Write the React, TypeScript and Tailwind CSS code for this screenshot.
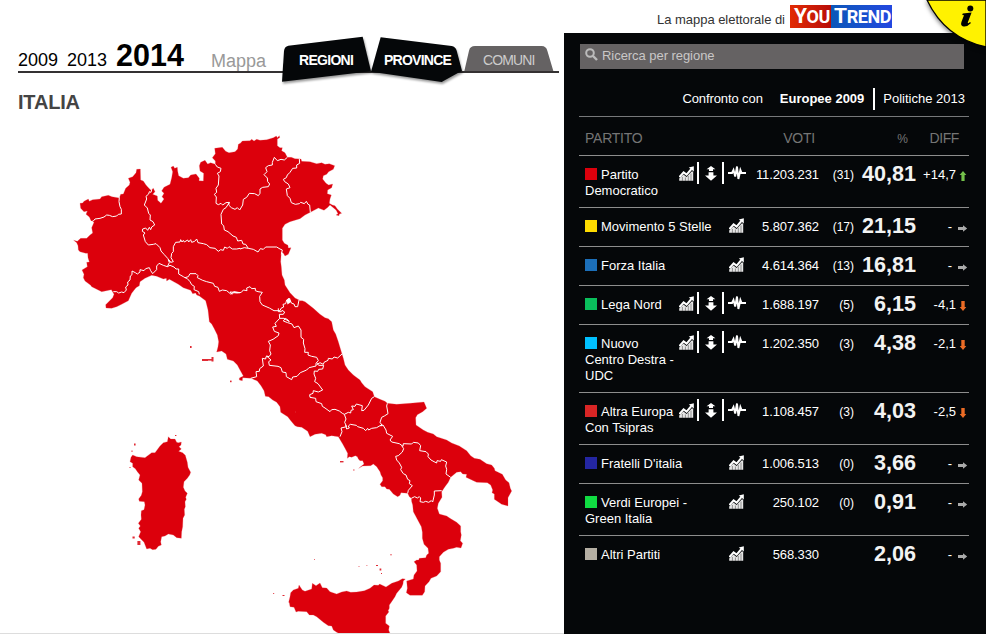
import React from "react";

type Tile = [number, number, string];

// Outlines are stored per map tile: tile origin followed by points at triple resolution.
function trace(tiles: Tile[], close = true): string {
  const pts = tiles.flatMap(([ox, oy, data]) =>
    data.split(" ").map((pair) => {
      const [u, v] = pair.split(",").map(Number);
      return `${(ox + u / 3).toFixed(2)} ${(oy + v / 3).toFixed(2)}`;
    })
  );
  return `M${pts.join("L")}${close ? "Z" : ""}`;
}

const mainland: Tile[] = [
  [60, 125, "41,346 52,349 62,340 80,340 90,330 98,324 95,308 102,292 93,287 88,276 78,268 82,258 72,260 62,250 60,235 68,234 72,229 85,222 88,229 98,224 120,222 125,215 145,211 156,215 178,219 182,208 190,207 197,190 208,180 210,172 205,160 218,155 228,143 230,133 241,132 242,165 250,168 258,180 264,187 272,195 280,190 285,200 278,208 292,213 293,226 303,235 312,222 306,215 312,205 305,198 312,187 330,178 335,158 338,140 333,127 340,123 344,130 352,127 353,138 356,152 370,160 385,158 392,150 408,147 418,160 417,167 430,168 431,145 420,138 418,122 422,112 435,106 443,117 452,113 466,118 466,108 457,98 466,86 464,70 487,67 497,79 507,83 525,80 533,72 535,58"],
  [200, 125, "121,55 127,48 150,47 155,43 162,48 170,43 180,46 200,44 220,38 229,33 232,38 238,32 239,38 232,42 232,62 240,68 247,68 245,77 255,83 262,97 274,97 285,101 303,102 305,109 330,110 350,116 365,113 375,118 388,116 404,122 400,133 386,140 380,148 370,152 368,162 378,175 386,180 398,177 395,188 383,195 382,206 394,210 390,222 388,235 397,240 405,242 412,252 425,265 418,267 417,272 408,270 414,266 408,255 390,240 382,248 372,256 355,249 331,262 315,270 300,281 270,290 255,298 247,310 247,345 253,355 264,361 265,369 273,368 265,388 255,393 250,385 244,380 242,410 244,425 246,450 253,465 255,480 270,503 285,519 297,525"],
  [180, 270, "360,92 367,92 375,95 400,115 420,133 435,143 445,146 455,155 460,180 467,192 475,215 486,252 490,265 495,285 505,300 520,315 540,330 545,338 555,350 578,365 583,380"],
  [330, 340, "133,170 150,178 165,184 172,190 200,193 240,190 282,186 290,205 278,215 262,224 257,233 258,255 280,270 293,277 310,282 320,290 350,300 365,309 388,318 410,332 422,347 433,355 450,358 470,371 485,375 493,385 495,392 517,403 527,420 537,428 541,445 545,453 534,473 534,498 515,493 493,478 493,462 486,458 488,450 482,435 472,428 440,427 430,422 408,412 410,403 398,402 392,395 380,397 362,412 355,427 345,440 335,455 336,472 325,490 322,505 328,522 350,528 360,535 380,547 392,558"],
  [270, 500, "572,80 572,95 574,105 571,122 578,130 573,144 560,142 550,145 535,148 520,157 508,170 508,180 512,190 512,215 500,228 483,235 477,245 465,258 464,275 457,286 420,286 409,278 412,265 410,243 430,237 432,225 441,213 440,195 432,185 440,180 446,180 448,175 467,173 470,165 476,160 474,145 462,133 457,115 457,97 454,80 442,58 430,35 428,15 425,5"],
  [330, 340, "244,475 238,470 233,460 213,458 210,466 203,470 190,462 178,448 170,447 165,440 155,440 150,433 158,422 158,413 153,405 150,395 140,380 130,372 122,377 98,378 91,382 86,385 102,372 98,362 90,362 85,357 82,350 76,347 65,352 58,350 52,355 53,340 45,325 38,312 25,290"],
  [180, 270, "475,500 455,497 440,500 437,494 425,490 405,493 390,500 383,484 365,472 352,470 345,467 333,453 323,440 302,427 300,410 290,397 278,390 266,380 256,379 252,362 243,347 232,333 220,328 212,325 188,323 187,332 178,330 178,324 190,318 180,300 172,285 160,273 142,268 138,252 125,243 110,246 114,230 116,215 112,195 102,175 95,162 88,155 84,120 77,92 58,78"],
  [60, 125, "410,510 407,504 398,506 392,496 370,488 355,478 328,463 320,468 319,460 310,462 290,454 275,451 255,460 240,470 238,482 228,488 215,505 209,518 205,527 185,538 170,545 155,550 138,549 137,539 146,530 158,518 162,508 154,494 125,500 95,485 92,481 75,468 70,458 72,448 66,435 82,425 80,412 88,411 84,398 83,385 77,385 60,380 55,375 54,362 50,353"],
];

const sicily: Tile[] = [[270, 500, "406,237 400,243 399,252 395,262 380,280 375,290 365,305 358,315 358,325 354,333 357,335 347,348 347,370 358,378 356,390 362,405 215,405 200,397 190,390 185,378 175,377 160,367 140,350 130,345 118,345 110,335 85,334 78,336 72,322 60,320 58,308 56,307 60,290 62,278 70,270 85,265 87,255 97,270 105,274 125,267 127,250 138,257 150,249 157,263 170,264 180,275 200,282 215,276 230,273 242,277 260,276 283,272 300,265 312,255 325,256 329,252 348,261 365,250 385,243 397,236"]];

const sardinia: Tile[] = [[110, 420, "175,50 182,57 195,57 200,67 205,68 214,66 213,75 207,80 214,87 206,94 218,98 226,106 230,120 232,127 234,142 242,157 239,165 232,175 222,185 220,202 225,213 232,220 227,232 229,238 225,245 226,260 223,268 224,285 219,295 218,320 215,335 214,355 200,353 190,345 175,342 165,348 155,350 152,365 154,375 145,379 138,388 128,389 120,385 110,387 102,367 86,350 92,335 86,325 91,318 85,310 94,298 93,285 94,272 102,269 105,255 103,245 88,244 86,237 94,226 97,215 96,190 86,180 90,165 82,155 76,146 68,140 68,130 60,125 63,112 68,105 80,110 105,113 125,98 135,98 150,78 160,68 172,65"]];

const borders: Tile[][] = [
  [[60, 125, "178,217 177,230 180,245 184,253 184,267 175,268 170,273 158,275 148,271 140,270 132,276 120,280 105,282 100,288 93,290"]],
  [[60, 125, "276,190 273,202 268,200 266,207 258,214 260,222 253,240 262,249 266,265 271,270 270,285 279,290 284,300 275,306 272,314 268,307 263,316 257,309 248,312 247,319 255,324 250,330 256,350 265,360 280,358 288,356 300,368 303,378 312,388 323,400 332,412"]],
  [[60, 125, "160,500 170,500 176,504 185,501 192,503 199,495 197,486 204,480 203,471 210,465 211,453 216,449 216,438 226,443 232,447 240,441 240,434 252,437 257,431 268,428 272,437 278,446 290,434 290,423 297,415 310,421 322,425 330,421 342,426 348,432 356,432 356,447 370,455 375,458 382,461 390,470 395,479 403,484 402,494 416,500 418,508"]],
  [[60, 125, "322,425 328,413 325,404 332,412 340,410 333,398 335,385 340,380 340,365 347,352 360,351 362,344 366,351 370,346 373,351 383,345 386,351 392,344 395,352 404,349 410,342 414,353 430,356 440,359 450,368 465,370 475,379 482,374 490,376 494,366 502,370 507,365 517,372 530,372 540,370"],
   [200, 125, "120,372 133,368 145,370 160,373 174,381 181,371 190,373 197,366 210,366 230,366 240,372 247,375 244,388"]],
  [[60, 125, "375,458 385,455 390,446 408,446 414,452 412,458 428,466 440,470 460,475 464,484 474,487 478,499 487,495 500,497 512,507 522,500 540,503"],
   [200, 125, "90,501 96,508 101,503 112,504 124,502 130,495 141,497 140,489 150,485 155,491 166,490 166,497 174,500 187,502 179,514 180,530 187,540 208,549 222,557 240,557 243,550 251,546 249,538 257,536 260,525 267,520 275,535 282,537 285,545 293,545 297,525"]],
  [[200, 125, "46,118 52,126 63,130 61,140 52,145 57,153 55,180 48,190 50,202 43,208 49,216 48,235 55,239 63,235 68,240 78,233 88,232 86,240 94,248 105,253 112,248 119,255 128,240 130,223 140,217 148,205 164,206 175,212 180,205 180,192 188,187 205,185 209,177 203,170 202,159 192,149 201,140 197,128 205,122 217,120 217,112 223,97 232,107 243,103 253,105 262,97"]],
  [[200, 125, "88,232 78,248 70,253 63,268 65,297 71,302 73,315 84,320 99,333 109,337 113,348 125,346 129,357 137,358 145,370"]],
  [[200, 125, "298,102 299,115 290,120 290,129 278,130 270,142 262,150 259,158 250,163 254,170 265,177 270,188 259,192 262,212 270,220 274,233 286,238 298,236 302,232 313,236 319,229 324,238 329,240 331,262"]],
  [[180, 270, "295,115 295,125 304,125 306,121 314,126 310,133 298,133 299,145 285,160 289,169 278,171 283,184 297,189 295,197 279,208 265,214 271,225 269,242 273,252 267,260 260,258 273,270 266,275 268,286 294,289 303,293 307,306 318,308 319,320 335,329 338,321 351,319 361,308 380,300 387,293 408,288 408,280 415,272 410,262 395,259 384,255 385,247 374,247 375,236 370,219 371,208 363,202 363,180 355,168 342,173 336,162 323,158 310,153 316,145 324,150 328,155 312,145 299,145"]],
  [[180, 270, "267,260 258,260 257,267 247,265 250,288 239,296 238,304 228,305 230,320 212,325"]],
  [[180, 270, "410,284 420,278 430,283 432,277 444,271 445,265 457,267 462,261 473,264 486,252"]],
  [[180, 270, "410,278 416,286 431,286 428,297 416,298 413,304 403,303 402,312 407,325 404,335 414,341 428,360 415,366 400,362 399,370 389,374 390,382 407,385 408,395 425,401 427,409 435,414 450,425 455,419 465,418 478,423 487,430 493,433 498,447 494,457 500,470 483,474 486,485 480,500"]],
  [[180, 270, "493,433 505,427 512,429 513,421 520,419 515,408 525,409 529,402 547,407 545,422 552,421 565,405 575,385 583,380"]],
  [[180, 270, "497,465 500,477 508,474 505,468 511,463 529,466 533,470 550,475 557,482 563,475 566,480 575,475 590,473 600,467"], [330, 340, "157,257"]],
  [[330, 340, "172,190 170,198 174,221 163,228 155,232 150,247 157,257"]],
  [[330, 340, "150,257 159,255 168,270 170,280 188,289 180,300 185,306 208,311 219,319 220,311 245,312 250,307 265,309 272,317 269,332 288,335 295,342 294,350 303,360 312,365 320,369 321,362 332,364 334,359 350,366 347,378 350,388 348,402 362,412"]],
  [[330, 340, "215,317 221,326 217,336 205,347 197,349 200,360 208,369 215,382 212,389 220,401 228,405 233,418 240,422 238,431 247,437 235,451 233,460"]],
  [[330, 340, "244,475 254,470 262,474 268,470 272,474 270,485 280,487 287,484 296,487 304,482 308,486 313,465 313,453 335,452"]],
];

const islets: [number, number, number, number][] = [
  [190, 346, 1.6, 2], [202, 359, 6, 2], [208, 359, 4, 1.6], [211.5, 357, 2, 4.5], [230, 380.6, 1.6, 1.6],
  [295, 411.5, 1, 1], [340, 461, 3.5, 1.4], [353, 469.6, 1.6, 0.8], [134, 443.5, 1.6, 2], [131.5, 450.5, 1, 1.4],
  [129.5, 467, 1, 1], [175, 435, 1.4, 1], [132.5, 536.5, 2.2, 2], [137.4, 541, 3, 4], [376, 565, 2, 1], [379.6, 568.5, 1.7, 2], [381, 573, 1, 1],
  [390.5, 554, 1, 1.4], [358.5, 566, 1, 0.7], [366.5, 565, 0.8, 0.8], [282.5, 595, 2, 1], [273, 593, 1.2, 0.8], [314, 559, 1, 0.7],
];

function ItalyMap() {
  return (
    <svg className="block h-[634px] w-[564px] shrink-0" viewBox="0 0 564 634">
      <g fill="#dc000c" stroke="#e9616a" strokeWidth="0.25">
        <path d={trace(mainland)} />
        <path d={trace(sicily)} />
        <path d={trace(sardinia)} />
      </g>
      <g fill="none" stroke="#fff" strokeWidth="1" strokeLinejoin="round">
        {borders.map((b, i) => <path key={i} d={trace(b, false)} />)}
      </g>
      <path d="M286.5 300L290 298L291 302L287.5 304.5Z" fill="#fff" />
      <g fill="#e02a34">
        {islets.map(([x, y, w, h], i) => <rect key={i} x={x} y={y} width={w} height={h} />)}
      </g>
    </svg>
  );
}

function Tab({ label, shape, origin, className, fill, shadow }: { label: string; shape: string; origin: number; className: string; fill: string; shadow?: boolean }) {
  return (
    <button className={`relative flex h-[40px] items-center text-[14px] ${className}`}>
      <svg className={`absolute left-0 top-0 h-[52px] w-[92px] overflow-visible ${shadow ? "drop-shadow-[1px_2px_1px_rgba(0,0,0,0.4)]" : ""}`} viewBox={`${origin} 24 276 156`}>
        <path d={shape} fill={fill} />
      </svg>
      <span className="relative">{label}</span>
    </button>
  );
}

function Growth() {
  return (
    <svg className="h-[15px] w-[15px]" viewBox="0 0 15 15">
      <path d="M0.2 14.8V12.6L4.4 8.4L7.6 11L12.6 5.4L14.2 5.6V14.8Z" fill="#e6e6e6" />
      <path d="M3.4 11V15M6.4 11.5V15M9.3 10V15M12 7.5V15" stroke="#555" strokeWidth="0.6" />
      <path d="M0.4 11L4.6 6.4L7.6 8.6L12.4 3" fill="none" stroke="#fff" strokeWidth="2" />
      <path d="M9.8 1.6L14.8 0.3V5.6Z" fill="#fff" />
    </svg>
  );
}

function Flow() {
  return (
    <svg className="h-[15px] w-[12px]" viewBox="0 0 12 15" fill="#fff">
      <path d="M6 0L10.4 3.2H8V5H4V3.2H1.6ZM3.6 6.2H8.4V9.4H12L6 14.8L0 9.4H3.6Z" />
    </svg>
  );
}

function Pulse() {
  return (
    <svg className="h-[16px] w-[18px]" viewBox="0 0 18 16">
      <path d="M0 8h4L5.5 5L7.2 11.5L9 1.5L10.4 14L12.4 5L13.6 8H18" fill="none" stroke="#fff" strokeWidth="1.9" />
    </svg>
  );
}

function Arrow({ dir }: { dir: "up" | "down" | "flat" }) {
  const color = dir === "up" ? "text-[#74c14b]" : dir === "down" ? "text-[#eb6b25]" : "text-[#aaa]";
  const d = dir === "up" ? "M5 1L8.4 5H6.6V11H3.4V5H1.6Z" : dir === "down" ? "M5 11L8.3 7H6.7V1H3.3V7H1.7Z" : "M0 4.9H5V3.2L9.2 6.5L5 9.8V8.1H0Z";
  return <svg className={`mt-[3px] ml-[1px] h-[12px] w-[11px] ${color}`} viewBox="0 0 11 12"><path d={d} fill="currentColor" /></svg>;
}

interface Party { lines: string[]; color: string; full?: boolean; votes: string; seats: string; pct: string; diff: string; dir: "up" | "down" | "flat" }

const parties: Party[] = [
  { lines: ["Partito", "Democratico"], color: "bg-[#dc000c]", full: true, votes: "11.203.231", seats: "(31)", pct: "40,81", diff: "+14,7", dir: "up" },
  { lines: ["Movimento 5 Stelle"], color: "bg-[#ffdc00]", votes: "5.807.362", seats: "(17)", pct: "21,15", diff: "-", dir: "flat" },
  { lines: ["Forza Italia"], color: "bg-[#1c6fb9]", votes: "4.614.364", seats: "(13)", pct: "16,81", diff: "-", dir: "flat" },
  { lines: ["Lega Nord"], color: "bg-[#0abf5c]", full: true, votes: "1.688.197", seats: "(5)", pct: "6,15", diff: "-4,1", dir: "down" },
  { lines: ["Nuovo", "Centro Destra -", "UDC"], color: "bg-[#00c0ff]", full: true, votes: "1.202.350", seats: "(3)", pct: "4,38", diff: "-2,1", dir: "down" },
  { lines: ["Altra Europa", "Con Tsipras"], color: "bg-[#d92525]", full: true, votes: "1.108.457", seats: "(3)", pct: "4,03", diff: "-2,5", dir: "down" },
  { lines: ["Fratelli D'italia"], color: "bg-[#2426a2]", votes: "1.006.513", seats: "(0)", pct: "3,66", diff: "-", dir: "flat" },
  { lines: ["Verdi Europei -", "Green Italia"], color: "bg-[#10dc42]", votes: "250.102", seats: "(0)", pct: "0,91", diff: "-", dir: "flat" },
  { lines: ["Altri Partiti"], color: "bg-[#b5afa3]", votes: "568.330", seats: "", pct: "2,06", diff: "-", dir: "flat" },
];

function Row({ p }: { p: Party }) {
  return (
    <div className="flex min-h-[39px] items-start border-t border-[#8d8d8d] pt-[11px] pb-[8px] pl-[6px] text-[13px] leading-[16px] text-white">
      <div className="w-0 flex-1 whitespace-nowrap">
        {p.lines.map((line, i) => (
          <div key={line} className="flex h-[16px] items-center">
            {i === 0 && <span className={`mr-[4px] mb-[2px] h-[12px] w-[12px] ${p.color}`} />}
            {line}
          </div>
        ))}
      </div>
      <div className="-mt-[5px] flex h-[22px] items-center">
        <Growth />
        {p.full && (
          <>
            <span className="ml-[3px] h-[22px] w-[2px] bg-white" />
            <span className="mx-[6px]"><Flow /></span>
            <span className="mr-[4px] ml-[-1px] h-[22px] w-[2px] bg-white" />
            <Pulse />
          </>
        )}
        {!p.full && <span className="w-[2px]" />}
      </div>
      <span className="w-[73px] text-right tracking-[-0.1px]">{p.votes}</span>
      <span className="w-[36px] pr-[1px] text-right text-[12px]">{p.seats}</span>
      <span className="-mt-px w-[61px] text-right text-[21.6px] font-bold text-[#f3f3f3]">{p.pct}</span>
      <span className={`w-[40px] text-right ${p.diff === "-" ? "pr-[4px]" : ""}`}>{p.diff}</span>
      <span className="w-[13px] pl-[1px]"><Arrow dir={p.dir} /></span>
    </div>
  );
}

export default function App() {
  return (
    <div className="relative flex h-[634px] w-[986px] overflow-hidden bg-white font-['Liberation_Sans',Arial,sans-serif]">
      <main className="relative w-[564px] shrink-0">
        <ItalyMap />
        <div className="absolute left-[18px] top-0 w-[541px]">
          <header className="flex h-[73px] items-end border-b-2 border-[#343132]">
            <div className="-mb-[4px] flex w-[264px] items-baseline whitespace-nowrap text-[18px] leading-[30px] text-black">
              <span className="w-[49px]">2009</span>
              <span className="w-[49px]">2013</span>
              <b className="w-[95px] text-[30.5px]">2014</b>
              <span className="relative top-[1px] text-[#999]">Mappa</span>
            </div>
            <nav className="-mb-[2px] flex text-white">
              <Tab label="REGIONI" origin={36} fill="#050709" shadow className="w-[90px] pl-[17px] pt-[14px] font-bold tracking-[-0.7px]" shape="M36 170L42 78Q43 65 55 62L278 35L303 139Z" />
              <Tab label="PROVINCE" origin={306} fill="#050709" shadow className="w-[91px] pl-[12px] pt-[14px] font-bold tracking-[-0.75px]" shape="M332 37L545 63Q556 65 560 77L576 137L515 171L303 140Z" />
              <Tab label="COMUNI" origin={579} fill="#656263" className="w-[90px] pl-[20px] pt-[14px] tracking-[-0.9px] text-[#ccc]" shape="M583 138L597 77Q600 63 615 63H815Q828 63 832 77L850 138Z" />
            </nav>
          </header>
          <h1 className="mt-[17px] text-[20px] font-bold leading-[24px] tracking-[-0.2px] text-[#444]">ITALIA</h1>
        </div>
        <div className="absolute bottom-0 left-0 h-px w-[564px] bg-[#ddd]" />
      </main>
      <aside className="flex w-[422px] flex-col">
        <div className="flex h-[33px] items-center pl-[93px] text-[13px] text-[#333]">
          <span className="mt-[6px] w-[133px] whitespace-nowrap tracking-[-0.03px]">La mappa elettorale di</span>
          <div className="flex h-[23px] w-[102px] items-baseline whitespace-nowrap font-['Roboto'] text-[21px] font-bold leading-[23px] text-white">
            <span className="h-full w-[41px] bg-gradient-to-r from-[#e22a04] to-[#b80c08] pl-[4px] tracking-[-0.4px]">Y<span className="text-[18px]">OU</span></span>
            <span className="h-full w-[61px] bg-gradient-to-r from-[#0b57b8] to-[#2347e0] pl-[3px] tracking-[-0.4px]">T<span className="text-[18px]">REND</span></span>
          </div>
        </div>
        <section className="flex-1 bg-[#050709] pl-[15px] pt-[11px]">
          <div className="ml-px flex h-[25px] w-[384px] items-center bg-[#656263] pl-[5px] text-[13px] text-[#c9c7c7]">
            <svg className="mr-[4px] mb-[4px] h-[13px] w-[13px]" viewBox="0 0 13 13" fill="none" stroke="#bbb"><circle cx="5" cy="5" r="3.8" strokeWidth="2" /><path d="M8 8L12 12" strokeWidth="2.4" /></svg>
            <span className="mb-[2px] tracking-[-0.05px]">Ricerca per regione</span>
          </div>
          <div className="flex h-[47px] w-[386px] items-center justify-end text-[13px] text-white">
            <span className="mt-[13px] tracking-[-0.1px]">Confronto con</span>
            <b className="mt-[13px] ml-[17px]">Europee 2009</b>
            <span className="mr-[8px] ml-[9px] mt-[12px] h-[22px] w-[2px] bg-white" />
            <span className="mt-[13px]">Politiche 2013</span>
          </div>
          <div className="w-[390px]">
            <div className="flex h-[39px] items-center border-t border-[#77787a] pt-[5px] pl-[6px] text-[14px] text-[#757575]">
              <span className="w-[150px] tracking-[-0.25px]">PARTITO</span>
              <span className="w-[80px] text-right tracking-[-0.2px]">VOTI</span>
              <span className="w-[93px] text-right text-[12px]">%</span>
              <span className="w-[51px] text-right tracking-[-0.4px]">DIFF</span>
            </div>
            {parties.map((p) => <Row key={p.pct} p={p} />)}
          </div>
        </section>
      </aside>
      <svg className="absolute right-0 top-0 h-[50px] w-[64px] overflow-visible" viewBox="0 0 64 50">
        <path d="M5 0Q23 38 64 47V0Z" fill="#fff200" stroke="#000" strokeWidth="1.3" className="drop-shadow-[0_2px_2px_rgba(0,0,0,0.5)]" />
        <path d="M40.8 13.4L49.6 12.4L45.8 22.6Q45.6 24.4 48 22L49 23Q45 27.4 40.6 26.2Q38.2 25.2 39.6 21.6L42 15.2L40.2 15Z" />
        <circle cx="48.3" cy="8.4" r="3" />
      </svg>
    </div>
  );
}
